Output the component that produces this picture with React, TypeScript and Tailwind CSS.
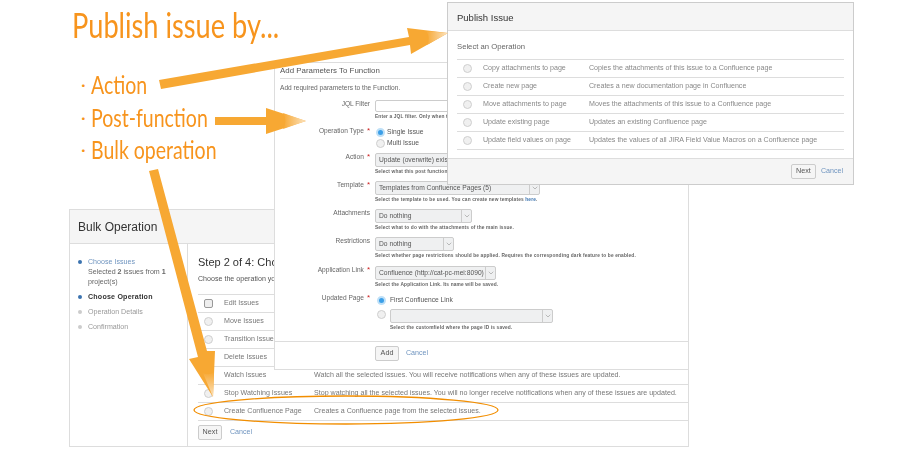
import { ChevronDown } from "lucide-react";
import type { ReactNode } from "react";

const publishOps = [
  ["Copy attachments to page", "Copies the attachments of this issue to a Confluence page"],
  ["Create new page", "Creates a new documentation page in Confluence"],
  ["Move attachments to page", "Moves the attachments of this issue to a Confluence page"],
  ["Update existing page", "Updates an existing Confluence page"],
  ["Update field values on page", "Updates the values of all JIRA Field Value Macros on a Confluence page"],
];

const bulkOps = [
  ["Edit Issues", "Edit field values of all the selected issues."],
  ["Move Issues", "Move the selected issues to another project."],
  ["Transition Issues", "Transition the selected issues through workflow."],
  ["Delete Issues", "Permanently delete the selected issues."],
  ["Watch Issues", "Watch all the selected issues. You will receive notifications when any of these issues are updated."],
  ["Stop Watching Issues", "Stop watching all the selected issues. You will no longer receive notifications when any of these issues are updated."],
  ["Create Confluence Page", "Creates a Confluence page from the selected issues."],
];

const headlines = ["Action", "Post-function", "Bulk operation"];

function Radio({ checked = false }: { checked?: boolean }) {
  return (
    <span
      className={
        checked
          ? "block w-[9px] h-[9px] shrink-0 rounded-full bg-[#3b9fe8] border-2 border-[#bfe0f7]"
          : "block w-[9px] h-[9px] shrink-0 rounded-full bg-[#f0f0f0] border border-[#cfcfcf]"
      }
    />
  );
}

function Select({ className, children }: { className: string; children?: ReactNode }) {
  return (
    <div className={`h-[14px] flex items-center bg-[#eff0f1] border border-[#cccccc] rounded-[2px] text-[6.7px] text-[#555555] ${className}`}>
      <span className="flex-1 pl-[3px] truncate">{children}</span>
      <span className="w-[10px] h-full flex items-center justify-center border-l border-[#cccccc]">
        <ChevronDown size={8} strokeWidth={1.2} color="#666666" />
      </span>
    </div>
  );
}

function Hint({ children }: { children: ReactNode }) {
  return <div className="text-[4.8px] font-bold tracking-[0.15px] text-[#666666] mt-[1px] leading-[7px] whitespace-nowrap">{children}</div>;
}

function Field({ label, required = false, height, children }: { label: string; required?: boolean; height: string; children: ReactNode }) {
  return (
    <div className={`flex ${height}`}>
      <div className="w-[95px] text-right text-[6.6px] leading-[8px] text-[#666666] whitespace-nowrap">
        {label}
        {required && <span className="text-[#cc2222] ml-[3px] text-[8px]">*</span>}
      </div>
      <div className="ml-[5px] flex-1 min-w-0">{children}</div>
    </div>
  );
}

function Button({ children, className }: { children: ReactNode; className: string }) {
  return (
    <div className={`h-[15px] flex items-center justify-center bg-[#f5f5f5] border border-[#cccccc] rounded-[2px] text-[7.2px] text-[#555555] ${className}`}>
      {children}
    </div>
  );
}

function BulkPanel() {
  return (
    <div className="absolute left-[69px] top-[209px] w-[620px] h-[238px] flex flex-col border border-[#dddddd] bg-white blur-[0.3px]">
      <div className="h-[34px] shrink-0 flex items-center pl-[8px] bg-[#f5f5f5] border-b border-[#dddddd] text-[12px] text-[#333333]">Bulk Operation</div>
      <div className="flex-1 flex min-h-0">
        <div className="w-[118px] shrink-0 border-r border-[#dddddd] pt-[13px] pl-[8px] text-[7.1px] leading-[10px] text-[#666666]">
          <div className="flex">
            <span className="w-[4px] h-[4px] mt-[3px] rounded-full bg-[#3b73af]" />
            <div className="ml-[6px]">
              <div className="text-[#6f94bf]">Choose Issues</div>
              <div>Selected <b>2</b> issues from <b>1</b></div>
              <div>project(s)</div>
            </div>
          </div>
          <div className="flex mt-[5px] font-bold text-[#333333]">
            <span className="w-[4px] h-[4px] mt-[3px] rounded-full bg-[#3b73af]" />
            <span className="ml-[6px] tracking-[0.2px]">Choose Operation</span>
          </div>
          <div className="flex mt-[5px] text-[#999999]">
            <span className="w-[4px] h-[4px] mt-[3px] rounded-full bg-[#cccccc]" />
            <span className="ml-[6px]">Operation Details</span>
          </div>
          <div className="flex mt-[5px] text-[#999999]">
            <span className="w-[4px] h-[4px] mt-[3px] rounded-full bg-[#cccccc]" />
            <span className="ml-[6px]">Confirmation</span>
          </div>
        </div>
        <div className="flex-1 pl-[10px] pt-[11px] min-w-0">
          <div className="text-[11px] leading-[14px] text-[#333333]">Step 2 of 4: Choose Operation</div>
          <div className="text-[7.1px] leading-[10px] text-[#555555] mt-[5px]">Choose the operation you wish to perform</div>
          <div className="mt-[10px] border-t border-[#dddddd]">
            {bulkOps.map(([name, desc], i) => (
              <div key={name} className="h-[18px] flex items-center border-b border-[#dddddd] text-[7.1px] text-[#777777] whitespace-nowrap">
                <span className="w-[26px] pl-[6px] flex items-center">
                  {i === 0 ? <span className="block w-[9px] h-[9px] rounded-[2px] bg-[#eeeeee] border border-[#999999]" /> : <Radio />}
                </span>
                <span className="w-[90px]">{name}</span>
                <span>{desc}</span>
              </div>
            ))}
          </div>
          <div className="flex items-center mt-[4px]">
            <Button className="w-[24px]">Next</Button>
            <span className="ml-[8px] text-[7.1px] text-[#6f94bf]">Cancel</span>
          </div>
        </div>
      </div>
    </div>
  );
}

function ParamsPanel() {
  return (
    <div className="absolute left-[274px] top-[62px] w-[415px] h-[308px] flex flex-col border border-[#dddddd] bg-white blur-[0.3px]">
      <div className="mx-[5px] h-[15px] mt-[1px] border-b border-[#dddddd] text-[7.9px] leading-[14px] text-[#555555]">Add Parameters To Function</div>
      <div className="ml-[5px] mt-[4px] h-[17px] text-[6.6px] leading-[10px] text-[#666666]">Add required parameters to the Function.</div>
      <Field label="JQL Filter" height="h-[27px]">
        <div className="h-[12px] w-[300px] bg-white border border-[#cccccc] rounded-[2px]" />
        <Hint>Enter a JQL filter. Only when the issue matches the filter.</Hint>
      </Field>
      <Field label="Operation Type" required height="h-[26px]">
        <div className="flex items-center h-[11px] text-[6.7px] text-[#555555] gap-[2px] pl-[1px]"><Radio checked />Single Issue</div>
        <div className="flex items-center h-[11px] text-[6.7px] text-[#555555] gap-[2px] pl-[1px]"><Radio />Multi Issue</div>
      </Field>
      <Field label="Action" required height="h-[28px]">
        <Select className="w-[230px]">Update (overwrite) existing page</Select>
        <Hint>Select what this post function should do.</Hint>
      </Field>
      <Field label="Template" required height="h-[28px]">
        <Select className="w-[165px]">Templates from Confluence Pages (5)</Select>
        <Hint>Select the template to be used. You can create new templates <span className="text-[#3b73af]">here</span>.</Hint>
      </Field>
      <Field label="Attachments" height="h-[28px]">
        <Select className="w-[97px]">Do nothing</Select>
        <Hint>Select what to do with the attachments of the main issue.</Hint>
      </Field>
      <Field label="Restrictions" height="h-[29px]">
        <Select className="w-[79px]">Do nothing</Select>
        <Hint>Select whether page restrictions should be applied. Requires the corresponding dark feature to be enabled.</Hint>
      </Field>
      <Field label="Application Link" required height="h-[28px]">
        <Select className="w-[121px]">Confluence (http://cat-pc-mei:8090)</Select>
        <Hint>Select the Application Link. Its name will be saved.</Hint>
      </Field>
      <Field label="Updated Page" required height="h-[47px]">
        <div className="flex items-center h-[12px] text-[6.7px] text-[#555555] gap-[4px] pl-[2px]"><Radio checked />First Confluence Link</div>
        <div className="flex items-start mt-[3px] pl-[2px]">
          <span className="mt-[1px]"><Radio /></span>
          <div className="ml-[4px]">
            <Select className="w-[163px]" />
            <Hint>Select the customfield where the page ID is saved.</Hint>
          </div>
        </div>
      </Field>
      <div className="border-t border-[#dddddd] pl-[100px] pt-[4px] flex items-center">
        <Button className="w-[24px]">Add</Button>
        <span className="ml-[7px] text-[7.1px] text-[#6f94bf]">Cancel</span>
      </div>
    </div>
  );
}

function PublishPanel() {
  return (
    <div className="absolute left-[447px] top-[2px] w-[407px] h-[183px] flex flex-col border border-[#cccccc] bg-white blur-[0.3px]">
      <div className="h-[28px] shrink-0 flex items-center pl-[9px] pt-[3px] bg-[#f5f5f5] border-b border-[#dddddd] text-[9.5px] text-[#333333]">Publish Issue</div>
      <div className="flex-1 px-[9px] pt-[11px]">
        <div className="text-[7.7px] leading-[10px] text-[#666666] mb-[7px]">Select an Operation</div>
        <div className="border-t border-[#dddddd]">
          {publishOps.map(([name, desc]) => (
            <div key={name} className="h-[18px] flex items-center border-b border-[#dddddd] text-[7.1px] text-[#888888] whitespace-nowrap">
              <span className="w-[26px] pl-[6px] flex items-center"><Radio /></span>
              <span className="w-[106px]">{name}</span>
              <span>{desc}</span>
            </div>
          ))}
        </div>
      </div>
      <div className="h-[26px] shrink-0 flex items-center justify-end pr-[10px] bg-[#f5f5f5] border-t border-[#dddddd]">
        <Button className="w-[25px]">Next</Button>
        <span className="ml-[5px] text-[7.1px] text-[#6f94bf]">Cancel</span>
      </div>
    </div>
  );
}

function Arrows() {
  return (
    <svg className="absolute left-0 top-0" width="920" height="450" viewBox="0 0 920 450">
      <defs>
        <linearGradient id="tipA" x1="0" y1="0" x2="1" y2="0">
          <stop offset="0" stopColor="#f7a833" />
          <stop offset="1" stopColor="#fbe3c0" />
        </linearGradient>
        <linearGradient id="tipC" x1="0" y1="0" x2="0" y2="1">
          <stop offset="0" stopColor="#f7a833" />
          <stop offset="1" stopColor="#fbe3c0" />
        </linearGradient>
      </defs>
      <ellipse cx="346" cy="410" rx="152" ry="14" fill="none" stroke="#f28e00" strokeWidth="1.3" />
      <path d="M159 80 L409 37 L407 28 L448 33 L411 54 L410 45 L161 89 Z" fill="#f7a833" />
      <path d="M426 31 L448 33 L427 45 Q431 38 426 31 Z" fill="url(#tipA)" />
      <path d="M215 117 L266 117 L266 108 L306 121 L266 134 L266 125 L215 125 Z" fill="#f7a833" />
      <path d="M283 113 L306 121 L283 129 Q288 121 283 113 Z" fill="url(#tipA)" />
      <path d="M149 171 L158 169 L207 351 L215 351 L213 397 L189 359 L198 357 Z" fill="#f7a833" />
      <path d="M203 373 Q209 376 214 372 L213 397 Z" fill="url(#tipC)" />
    </svg>
  );
}

export default function App() {
  return (
    <div className="relative w-[920px] h-[450px] overflow-hidden bg-white font-['Liberation_Sans',Arial,sans-serif]">
      <BulkPanel />
      <ParamsPanel />
      <PublishPanel />
      <Arrows />
      <div className="absolute left-[72px] top-[5px] text-[34px] leading-[40px] text-[#f7941d] font-['Lato',sans-serif] whitespace-nowrap origin-left scale-x-[0.8]">Publish issue by...</div>
      <div className="absolute left-[81px] top-[68px] flex flex-col text-[25px] leading-[32.5px] text-[#f7941d] font-['Lato',sans-serif] whitespace-nowrap">
        {headlines.map((line) => (
          <div key={line} className="flex items-center">
            <span className="w-[10px] text-[18px]">·</span>
            <span className="origin-left scale-x-[0.78]">{line}</span>
          </div>
        ))}
      </div>
    </div>
  );
}
